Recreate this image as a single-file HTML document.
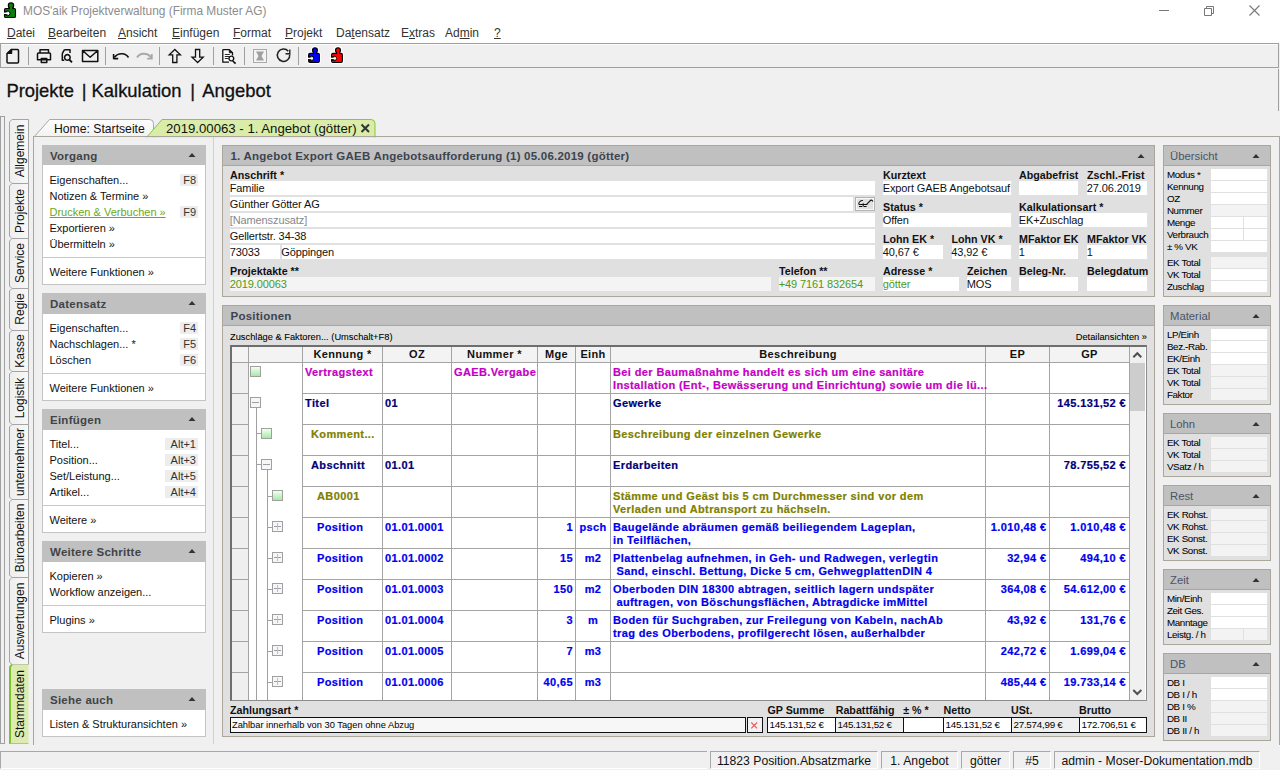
<!DOCTYPE html>
<html><head><meta charset="utf-8"><style>
html,body{margin:0;padding:0;}
body{width:1280px;height:770px;overflow:hidden;position:relative;background:#f0f0f0;font-family:"Liberation Sans", sans-serif;}
.a{position:absolute;}
.t{position:absolute;white-space:nowrap;}
u{text-decoration:underline;}
</style></head><body>
<div class="a" style="left:0px;top:0px;width:1280px;height:43px;background:#ffffff;"></div>
<svg class="a" style="left:0;top:0" width="20" height="20" viewBox="0 0 20 20"><g fill="none" stroke="#ffffff" stroke-width="3.4"><rect x="4.6" y="8.6" width="10.8" height="8.799999999999999" rx="1.2"/><circle cx="11" cy="5.4" r="2.6"/><rect x="9.3" y="5.4" width="3.4" height="4.199999999999999"/></g><g fill="#0a800a" stroke="#000" stroke-width="1.3"><rect x="4.6" y="8.6" width="10.8" height="8.799999999999999" rx="1.2"/><circle cx="11" cy="5.4" r="2.6"/><rect x="9.3" y="5.4" width="3.4" height="4.199999999999999"/></g><g fill="#0a800a" stroke="none"><rect x="5.199999999999999" y="9.2" width="9.600000000000001" height="7.599999999999999"/><circle cx="11" cy="5.4" r="2.0"/><rect x="9.9" y="5.4" width="2.2" height="4.699999999999999"/></g><circle cx="7.6" cy="13.3" r="2.4" fill="#ffffff" stroke="#000" stroke-width="1.0"/><rect x="3.5999999999999996" y="12.4" width="4.0" height="1.8" fill="#ffffff"/><path d="M3.9999999999999996 11.8h3.6 M3.9999999999999996 14.8h3.6" stroke="#000" stroke-width="1.1"/></svg>
<div class="t" style="top:6.03px;font-size:11.9px;line-height:11.9px;color:#8c8c8c;left:23px;">MOS'aik Projektverwaltung (Firma Muster AG)</div>
<div class="a" style="left:1159px;top:10px;width:10px;height:1px;background:#777;"></div>
<svg class="a" style="left:1202px;top:4px" width="14" height="14" viewBox="0 0 14 14"><path d="M2.5 4.5h7v7h-7z M4.5 4.5v-2h7v7h-2" fill="none" stroke="#777" stroke-width="1"/></svg>
<svg class="a" style="left:1248px;top:4px" width="14" height="14" viewBox="0 0 14 14"><path d="M1.5 1.5l10 10M11.5 1.5l-10 10" fill="none" stroke="#777" stroke-width="1.1"/></svg>
<div class="t" style="top:26.54px;font-size:12px;line-height:12px;color:#333;left:7px;"><u>D</u>atei</div>
<div class="t" style="top:26.54px;font-size:12px;line-height:12px;color:#333;left:48px;"><u>B</u>earbeiten</div>
<div class="t" style="top:26.54px;font-size:12px;line-height:12px;color:#333;left:118px;"><u>A</u>nsicht</div>
<div class="t" style="top:26.54px;font-size:12px;line-height:12px;color:#333;left:172px;"><u>E</u>infügen</div>
<div class="t" style="top:26.54px;font-size:12px;line-height:12px;color:#333;left:233px;"><u>F</u>ormat</div>
<div class="t" style="top:26.54px;font-size:12px;line-height:12px;color:#333;left:285px;"><u>P</u>rojekt</div>
<div class="t" style="top:26.54px;font-size:12px;line-height:12px;color:#333;left:336px;">Da<u>t</u>ensatz</div>
<div class="t" style="top:26.54px;font-size:12px;line-height:12px;color:#333;left:401px;">E<u>x</u>tras</div>
<div class="t" style="top:26.54px;font-size:12px;line-height:12px;color:#333;left:445px;">Ad<u>m</u>in</div>
<div class="t" style="top:26.54px;font-size:12px;line-height:12px;color:#333;left:494px;"><u>?</u></div>
<div class="a" style="left:0px;top:43px;width:1279px;height:25px;background:#f0f0f0;border:1px solid #a0a0a0;box-sizing:border-box;"></div>
<div class="a" style="left:1px;top:44px;width:1277px;height:1px;background:#fafafa;"></div>
<div class="a" style="left:28px;top:47px;width:1px;height:18px;background:#a0a0a0;"></div>
<div class="a" style="left:105px;top:47px;width:1px;height:18px;background:#a0a0a0;"></div>
<div class="a" style="left:159px;top:47px;width:1px;height:18px;background:#a0a0a0;"></div>
<div class="a" style="left:213px;top:47px;width:1px;height:18px;background:#a0a0a0;"></div>
<div class="a" style="left:244px;top:47px;width:1px;height:18px;background:#a0a0a0;"></div>
<div class="a" style="left:298px;top:47px;width:1px;height:18px;background:#a0a0a0;"></div>
<svg class="a" style="left:0;top:43px" width="360" height="25" viewBox="0 43 360 25">
<g fill="none" stroke="#111" stroke-width="1.5" stroke-linejoin="round">
<path d="M11.5 49.5h6a1 1 0 0 1 1 1v11.5a1 1 0 0 1-1 1h-9.5a1 1 0 0 1-1-1v-8.5z"/>
<path d="M7.8 53.3l3.7-3.8v3.8z" fill="#111"/>
<path d="M40 53v-3.3h8.5v3.3 M38.5 53h11a1 1 0 0 1 1 1v5.8h-13v-5.8a1 1 0 0 1 1-1z M41.3 58.5h5.5v4h-5.5z"/>
<path d="M64.5 49.7h5.5v3.3 M62.3 53.5l2.2-3.8 M62.3 53.5v6.8h2"/>
<path d="M67.3 54.6a2.8 2.8 0 1 0 .1 0z" stroke-width="1.6"/>
<path d="M69.2 59.5l2.8 2.8" stroke-width="1.8"/>
<path d="M82.5 50.5h15.3v11h-15.3z M82.5 50.5l7.65 6.8l7.65-6.8"/>
<path d="M128.5 57.5c-2.5-4.5-10-5.5-14.2 0" stroke-width="1.6"/>
<path d="M113.6 54v4.6h4.6" stroke-width="1.6"/>
</g>
<g fill="none" stroke="#a8a8a8" stroke-width="1.8"><path d="M137 57.5c2.5-4.5 10-5.5 14.2 0 M151.8 54v4.6h-4.6"/></g>
<g fill="none" stroke="#111" stroke-width="1.3" stroke-linejoin="miter">
<path d="M174.8 49.5l-5.6 5.4h3.5v7.6h4.2v-7.6h3.5z"/>
<path d="M197.6 62.5l-5.6-5.4h3.5v-7.6h4.2v7.6h3.5z"/>
</g>
<g fill="none" stroke="#111" stroke-width="1.3" stroke-linejoin="round">
<path d="M222.8 49.6h6.5l3.2 3.2v9.4h-9.7z" fill="#fafafa" stroke="none"/><path d="M222.8 49.6h6.5l3.2 3.2v2.6 M222.8 49.6v12.6h6.2"/><path d="M229.3 49.9l2.9 2.9h-2.9z" fill="#111" stroke-width="0.8"/>
<path d="M224.8 54.5h5 M224.8 56.5h5 M224.8 58.5h3.5" stroke-width="0.9" stroke-linecap="butt"/>
<path d="M231.3 56.1a2.4 2.4 0 1 0 .1 0z" fill="#fafafa" stroke-width="1.4"/>
<path d="M232.8 61l2.8 2.6" stroke-width="1.7"/>
</g>
<rect x="253.5" y="49.5" width="13" height="13" fill="#f4f4f4" stroke="#a8a8a8" stroke-width="1"/>
<path d="M256 51.5h8l-2.5 4.5l2.5 4.5h-8l2.5-4.5z" fill="#a0a0a0"/>
<g fill="none" stroke="#222" stroke-width="1.5"><path d="M288.3 51.2a6.2 6.2 0 1 0 1.4 3.2"/><path d="M289.8 49.5v4.3h-4.3" stroke-width="1.4"/></g>
<g fill="none" stroke="#ffffff" stroke-width="3.4"><rect x="308.7" y="53.5" width="10.600000000000023" height="8.799999999999997" rx="1.2"/><circle cx="315" cy="50.2" r="2.4"/><rect x="313.5" y="50.2" width="3" height="4.299999999999997"/></g><g fill="#0000ff" stroke="#000" stroke-width="1.3"><rect x="308.7" y="53.5" width="10.600000000000023" height="8.799999999999997" rx="1.2"/><circle cx="315" cy="50.2" r="2.4"/><rect x="313.5" y="50.2" width="3" height="4.299999999999997"/></g><g fill="#0000ff" stroke="none"><rect x="309.3" y="54.1" width="9.400000000000023" height="7.599999999999997"/><circle cx="315" cy="50.2" r="1.7999999999999998"/><rect x="314.1" y="50.2" width="1.8" height="4.799999999999997"/></g><circle cx="311.4" cy="58.4" r="2.2" fill="#ffffff" stroke="#000" stroke-width="1.0"/><rect x="307.7" y="57.5" width="3.6999999999999886" height="1.8" fill="#ffffff"/><path d="M308.09999999999997 56.9h3.2999999999999887 M308.09999999999997 59.9h3.2999999999999887" stroke="#000" stroke-width="1.1"/>
<g fill="none" stroke="#ffffff" stroke-width="3.4"><rect x="331.7" y="53.5" width="10.600000000000023" height="8.799999999999997" rx="1.2"/><circle cx="338" cy="50.2" r="2.4"/><rect x="336.5" y="50.2" width="3" height="4.299999999999997"/></g><g fill="#ff0000" stroke="#000" stroke-width="1.3"><rect x="331.7" y="53.5" width="10.600000000000023" height="8.799999999999997" rx="1.2"/><circle cx="338" cy="50.2" r="2.4"/><rect x="336.5" y="50.2" width="3" height="4.299999999999997"/></g><g fill="#ff0000" stroke="none"><rect x="332.3" y="54.1" width="9.400000000000023" height="7.599999999999997"/><circle cx="338" cy="50.2" r="1.7999999999999998"/><rect x="337.1" y="50.2" width="1.8" height="4.799999999999997"/></g><circle cx="334.4" cy="58.4" r="2.2" fill="#ffffff" stroke="#000" stroke-width="1.0"/><rect x="330.7" y="57.5" width="3.6999999999999886" height="1.8" fill="#ffffff"/><path d="M331.09999999999997 56.9h3.2999999999999887 M331.09999999999997 59.9h3.2999999999999887" stroke="#000" stroke-width="1.1"/>
</svg>
<div class="t" style="top:81.62px;font-size:18.4px;line-height:18.4px;color:#111;left:6.4px;-webkit-text-stroke:0.3px #111;">Projekte</div>
<div class="t" style="top:81.62px;font-size:18.4px;line-height:18.4px;color:#111;left:81.8px;-webkit-text-stroke:0.3px #111;">|</div>
<div class="t" style="top:81.62px;font-size:18.4px;line-height:18.4px;color:#111;left:91.6px;-webkit-text-stroke:0.3px #111;">Kalkulation</div>
<div class="t" style="top:81.62px;font-size:18.4px;line-height:18.4px;color:#111;left:190.2px;-webkit-text-stroke:0.3px #111;">|</div>
<div class="t" style="top:81.62px;font-size:18.4px;line-height:18.4px;color:#111;left:202.3px;-webkit-text-stroke:0.3px #111;">Angebot</div>
<div class="a" style="left:1278px;top:69px;width:1px;height:42px;background:#a0a0a0;"></div>
<div class="a" style="left:0px;top:116px;width:5px;height:628px;border:1px solid #a0a0a0;box-sizing:border-box;"></div>
<svg class="a" style="left:0;top:0" width="40" height="770" viewBox="0 0 40 770"><defs><linearGradient id="vt" x1="0" y1="0" x2="1" y2="0"><stop offset="0" stop-color="#eeeeee"/><stop offset="1" stop-color="#f8f8f8"/></linearGradient></defs><path d="M28.5 119.5H12L9.5 122V181L12 183.5H28.5z" fill="url(#vt)" stroke="#a4a4a4" stroke-width="1"/><path d="M28.5 183.5H12L9.5 186V236L12 238.5H28.5z" fill="url(#vt)" stroke="#a4a4a4" stroke-width="1"/><path d="M28.5 238.5H12L9.5 241V286L12 288.5H28.5z" fill="url(#vt)" stroke="#a4a4a4" stroke-width="1"/><path d="M28.5 288.5H12L9.5 291V328L12 330.5H28.5z" fill="url(#vt)" stroke="#a4a4a4" stroke-width="1"/><path d="M28.5 330.5H12L9.5 333V369L12 371.5H28.5z" fill="url(#vt)" stroke="#a4a4a4" stroke-width="1"/><path d="M28.5 371.5H12L9.5 374V422L12 424.5H28.5z" fill="url(#vt)" stroke="#a4a4a4" stroke-width="1"/><path d="M28.5 424.5H12L9.5 427V497L12 499.5H28.5z" fill="url(#vt)" stroke="#a4a4a4" stroke-width="1"/><path d="M28.5 499.5H12L9.5 502V575L12 577.5H28.5z" fill="url(#vt)" stroke="#a4a4a4" stroke-width="1"/><path d="M28.5 577.5H12L9.5 580V662L12 664.5H28.5z" fill="url(#vt)" stroke="#a4a4a4" stroke-width="1"/><path d="M28.5 664.5H12L9.5 667V744H28.5z" fill="#dcebb0"/><path d="M12 664.5L10 667V744" fill="none" stroke="#7fc030" stroke-width="2"/><path d="M10 743.5H28.5" fill="none" stroke="#b8b8b8" stroke-width="1"/></svg>
<div class="t" style="left:-40px;top:144.0px;width:120px;height:14px;line-height:14px;font-size:12px;text-align:center;transform:rotate(-90deg);color:#111">Allgemein</div>
<div class="t" style="left:-40px;top:203.5px;width:120px;height:14px;line-height:14px;font-size:12px;text-align:center;transform:rotate(-90deg);color:#111">Projekte</div>
<div class="t" style="left:-40px;top:256.0px;width:120px;height:14px;line-height:14px;font-size:12px;text-align:center;transform:rotate(-90deg);color:#111">Service</div>
<div class="t" style="left:-40px;top:302.0px;width:120px;height:14px;line-height:14px;font-size:12px;text-align:center;transform:rotate(-90deg);color:#111">Regie</div>
<div class="t" style="left:-40px;top:343.5px;width:120px;height:14px;line-height:14px;font-size:12px;text-align:center;transform:rotate(-90deg);color:#111">Kasse</div>
<div class="t" style="left:-40px;top:390.5px;width:120px;height:14px;line-height:14px;font-size:12px;text-align:center;transform:rotate(-90deg);color:#111">Logistik</div>
<div class="t" style="left:-40px;top:454.5px;width:120px;height:14px;line-height:14px;font-size:12px;text-align:center;transform:rotate(-90deg);color:#111">unternehmer</div>
<div class="t" style="left:-40px;top:531.0px;width:120px;height:14px;line-height:14px;font-size:12px;text-align:center;transform:rotate(-90deg);color:#111">Büroarbeiten</div>
<div class="t" style="left:-40px;top:613.5px;width:120px;height:14px;line-height:14px;font-size:12px;text-align:center;transform:rotate(-90deg);color:#111">Auswertungen</div>
<div class="t" style="left:-40px;top:697.0px;width:120px;height:14px;line-height:14px;font-size:12px;text-align:center;transform:rotate(-90deg);color:#111">Stammdaten</div>
<svg class="a" style="left:30px;top:115px" width="360" height="23" viewBox="30 115 360 23">
<defs><linearGradient id="gw" x1="0" y1="0" x2="0" y2="1"><stop offset="0" stop-color="#fdfdfd"/><stop offset="1" stop-color="#f2f2f2"/></linearGradient></defs>
<path d="M33.5 137.5l16-18h100a4 4 0 0 1 4 4v14" fill="url(#gw)" stroke="#a8a8a8" stroke-width="1"/>
<path d="M146.5 137.5l15.5-18h209a4 4 0 0 1 4 4v14" fill="#d9eca8" stroke="#8cc43c" stroke-width="1"/>
</svg>
<div class="t" style="top:122.87px;font-size:12.2px;line-height:12.2px;color:#111;left:54px;">Home: Startseite</div>
<div class="t" style="top:122.03px;font-size:13.2px;line-height:13.2px;color:#111;left:166px;">2019.00063 - 1. Angebot (götter)</div>
<svg class="a" style="left:360px;top:123px" width="11" height="11" viewBox="0 0 11 11"><path d="M1.5 1.5l7.5 7.5M9 1.5l-7.5 7.5" stroke="#333" stroke-width="2"/></svg>
<div class="a" style="left:33px;top:136px;width:1247px;height:609px;border:1px solid #aaa69a;box-sizing:border-box;border-bottom:none;"></div>
<div class="a" style="left:213px;top:137px;width:1px;height:607px;background:#d0d0d0;"></div>
<div class="a" style="left:42px;top:145px;width:164px;height:20px;background:#c0c0c0;"></div>
<div class="a" style="left:42px;top:165px;width:164px;height:120px;background:#ffffff;border:1px solid #c4c4c4;box-sizing:border-box;border-top:none;"></div>
<div class="t" style="top:150.87px;font-size:11.5px;line-height:11.5px;color:#404448;letter-spacing:0.25px;font-weight:700;left:50px;">Vorgang</div>
<svg class="a" style="left:187.5px;top:152px" width="8" height="6" viewBox="0 0 8 6"><path d="M0.5 5h7l-3.5-4z" fill="#333"/></svg>
<div class="t" style="top:174.69px;font-size:11px;line-height:11px;color:#111;left:49.5px;">Eigenschaften...</div>
<div class="a" style="left:180px;top:173.7px;width:18px;height:12.300000000000011px;background:#ededed;"></div>
<div class="t" style="top:174.69px;font-size:11px;line-height:11px;color:#333;right:1084px;">F8</div>
<div class="t" style="top:190.69px;font-size:11px;line-height:11px;color:#111;left:49.5px;">Notizen &amp; Termine »</div>
<div class="t" style="top:206.69px;font-size:11px;line-height:11px;color:#6aa818;left:49.5px;text-decoration:underline;">Drucken &amp; Verbuchen »</div>
<div class="a" style="left:180px;top:205.7px;width:18px;height:12.300000000000011px;background:#ededed;"></div>
<div class="t" style="top:206.69px;font-size:11px;line-height:11px;color:#333;right:1084px;">F9</div>
<div class="t" style="top:222.69px;font-size:11px;line-height:11px;color:#111;left:49.5px;">Exportieren »</div>
<div class="t" style="top:238.69px;font-size:11px;line-height:11px;color:#111;left:49.5px;">Übermitteln »</div>
<div class="a" style="left:43px;top:257px;width:162px;height:1px;background:#c8c8c8;"></div>
<div class="t" style="top:266.69px;font-size:11px;line-height:11px;color:#111;left:49.5px;">Weitere Funktionen »</div>
<div class="a" style="left:42px;top:293px;width:164px;height:21px;background:#c0c0c0;"></div>
<div class="a" style="left:42px;top:314px;width:164px;height:87px;background:#ffffff;border:1px solid #c4c4c4;box-sizing:border-box;border-top:none;"></div>
<div class="t" style="top:298.87px;font-size:11.5px;line-height:11.5px;color:#404448;letter-spacing:0.25px;font-weight:700;left:50px;">Datensatz</div>
<svg class="a" style="left:187.5px;top:300px" width="8" height="6" viewBox="0 0 8 6"><path d="M0.5 5h7l-3.5-4z" fill="#333"/></svg>
<div class="t" style="top:322.99px;font-size:11px;line-height:11px;color:#111;left:49.5px;">Eigenschaften...</div>
<div class="a" style="left:180px;top:322.0px;width:18px;height:12.300000000000011px;background:#ededed;"></div>
<div class="t" style="top:322.99px;font-size:11px;line-height:11px;color:#333;right:1084px;">F4</div>
<div class="t" style="top:338.99px;font-size:11px;line-height:11px;color:#111;left:49.5px;">Nachschlagen... *</div>
<div class="a" style="left:180px;top:338.0px;width:18px;height:12.300000000000011px;background:#ededed;"></div>
<div class="t" style="top:338.99px;font-size:11px;line-height:11px;color:#333;right:1084px;">F5</div>
<div class="t" style="top:354.99px;font-size:11px;line-height:11px;color:#111;left:49.5px;">Löschen</div>
<div class="a" style="left:180px;top:354.0px;width:18px;height:12.300000000000011px;background:#ededed;"></div>
<div class="t" style="top:354.99px;font-size:11px;line-height:11px;color:#333;right:1084px;">F6</div>
<div class="a" style="left:43px;top:373px;width:162px;height:1px;background:#c8c8c8;"></div>
<div class="t" style="top:382.99px;font-size:11px;line-height:11px;color:#111;left:49.5px;">Weitere Funktionen »</div>
<div class="a" style="left:42px;top:409px;width:164px;height:21px;background:#c0c0c0;"></div>
<div class="a" style="left:42px;top:430px;width:164px;height:103px;background:#ffffff;border:1px solid #c4c4c4;box-sizing:border-box;border-top:none;"></div>
<div class="t" style="top:414.87px;font-size:11.5px;line-height:11.5px;color:#404448;letter-spacing:0.25px;font-weight:700;left:50px;">Einfügen</div>
<svg class="a" style="left:187.5px;top:416px" width="8" height="6" viewBox="0 0 8 6"><path d="M0.5 5h7l-3.5-4z" fill="#333"/></svg>
<div class="t" style="top:439.19px;font-size:11px;line-height:11px;color:#111;left:49.5px;">Titel...</div>
<div class="a" style="left:165px;top:438.2px;width:33px;height:12.300000000000011px;background:#ededed;"></div>
<div class="t" style="top:439.19px;font-size:11px;line-height:11px;color:#333;right:1084px;">Alt+1</div>
<div class="t" style="top:455.19px;font-size:11px;line-height:11px;color:#111;left:49.5px;">Position...</div>
<div class="a" style="left:165px;top:454.2px;width:33px;height:12.300000000000011px;background:#ededed;"></div>
<div class="t" style="top:455.19px;font-size:11px;line-height:11px;color:#333;right:1084px;">Alt+3</div>
<div class="t" style="top:471.19px;font-size:11px;line-height:11px;color:#111;left:49.5px;">Set/Leistung...</div>
<div class="a" style="left:165px;top:470.2px;width:33px;height:12.300000000000011px;background:#ededed;"></div>
<div class="t" style="top:471.19px;font-size:11px;line-height:11px;color:#333;right:1084px;">Alt+5</div>
<div class="t" style="top:487.19px;font-size:11px;line-height:11px;color:#111;left:49.5px;">Artikel...</div>
<div class="a" style="left:165px;top:486.2px;width:33px;height:12.300000000000011px;background:#ededed;"></div>
<div class="t" style="top:487.19px;font-size:11px;line-height:11px;color:#333;right:1084px;">Alt+4</div>
<div class="a" style="left:43px;top:505px;width:162px;height:1px;background:#c8c8c8;"></div>
<div class="t" style="top:514.99px;font-size:11px;line-height:11px;color:#111;left:49.5px;">Weitere »</div>
<div class="a" style="left:42px;top:541px;width:164px;height:21px;background:#c0c0c0;"></div>
<div class="a" style="left:42px;top:562px;width:164px;height:71px;background:#ffffff;border:1px solid #c4c4c4;box-sizing:border-box;border-top:none;"></div>
<div class="t" style="top:546.87px;font-size:11.5px;line-height:11.5px;color:#404448;letter-spacing:0.25px;font-weight:700;left:50px;">Weitere Schritte</div>
<svg class="a" style="left:187.5px;top:548px" width="8" height="6" viewBox="0 0 8 6"><path d="M0.5 5h7l-3.5-4z" fill="#333"/></svg>
<div class="t" style="top:571.19px;font-size:11px;line-height:11px;color:#111;left:49.5px;">Kopieren »</div>
<div class="t" style="top:587.19px;font-size:11px;line-height:11px;color:#111;left:49.5px;">Workflow anzeigen...</div>
<div class="a" style="left:43px;top:605px;width:162px;height:1px;background:#c8c8c8;"></div>
<div class="t" style="top:614.89px;font-size:11px;line-height:11px;color:#111;left:49.5px;">Plugins »</div>
<div class="a" style="left:42px;top:689px;width:164px;height:21px;background:#c0c0c0;"></div>
<div class="a" style="left:42px;top:710px;width:164px;height:27px;background:#ffffff;border:1px solid #c4c4c4;box-sizing:border-box;border-top:none;"></div>
<div class="t" style="top:694.87px;font-size:11.5px;line-height:11.5px;color:#404448;letter-spacing:0.25px;font-weight:700;left:50px;">Siehe auch</div>
<svg class="a" style="left:187.5px;top:696px" width="8" height="6" viewBox="0 0 8 6"><path d="M0.5 5h7l-3.5-4z" fill="#333"/></svg>
<div class="t" style="top:719.19px;font-size:11px;line-height:11px;color:#111;left:49.5px;">Listen &amp; Strukturansichten »</div>
<div class="a" style="left:222px;top:145px;width:933px;height:152px;background:#e0e0e0;border:1px solid #aaa69a;box-sizing:border-box;"></div>
<div class="a" style="left:223px;top:146px;width:931px;height:19px;background:#c0c0c0;"></div>
<div class="a" style="left:223px;top:165px;width:931px;height:1px;background:#aaa69a;"></div>
<div class="t" style="top:150.87px;font-size:11.5px;line-height:11.5px;color:#3c4450;letter-spacing:0.225px;font-weight:700;left:230.5px;">1. Angebot Export GAEB Angebotsaufforderung (1) 05.06.2019 (götter)</div>
<svg class="a" style="left:1137px;top:153px" width="8" height="6" viewBox="0 0 8 6"><path d="M0.5 5h7l-3.5-4z" fill="#333"/></svg>
<div class="t" style="top:169.64px;font-size:10.7px;line-height:10.7px;color:#111;font-weight:700;left:230px;">Anschrift *</div>
<div class="a" style="left:230px;top:181px;width:645px;height:14px;background:#fff;"></div>
<div class="t" style="top:183.09px;font-size:11px;line-height:11px;color:#111;letter-spacing:-0.1px;left:229.7px;">Familie</div>
<div class="a" style="left:230px;top:197px;width:623px;height:14px;background:#fff;"></div>
<div class="t" style="top:199.09px;font-size:11px;line-height:11px;color:#111;letter-spacing:-0.1px;left:229.7px;">Günther Götter AG</div>
<div class="a" style="left:855px;top:197px;width:20px;height:14px;background:#e8e8e8;border:1px solid #b4b4b4;box-sizing:border-box;"></div>
<svg class="a" style="left:850px;top:194px" width="30" height="20" viewBox="850 194 30 20"><rect x="856.5" y="198.5" width="17" height="11" fill="#e2e2e2" stroke="#f8f8f8" stroke-width="1"/><g fill="none" stroke="#111" stroke-width="1.05"><path d="M858.6 204.2C858.9 201.8 860.8 200.2 862.9 200.6"/><path d="M858.8 204.4H867.4 M859 206.5H862.3 M863.6 206.5H866.6 M863.2 203.2V206.2"/><path d="M866.6 204.3L870.6 200.3Q871.9 199.6 873 201.4"/></g></svg>
<div class="a" style="left:230px;top:213px;width:645px;height:14px;background:#fff;"></div>
<div class="t" style="top:215.09px;font-size:11px;line-height:11px;color:#888;letter-spacing:-0.1px;left:229.7px;">[Namenszusatz]</div>
<div class="a" style="left:230px;top:229px;width:645px;height:14px;background:#fff;"></div>
<div class="t" style="top:231.09px;font-size:11px;line-height:11px;color:#111;letter-spacing:-0.1px;left:229.7px;">Gellertstr. 34-38</div>
<div class="a" style="left:230px;top:245px;width:50px;height:14px;background:#fff;"></div>
<div class="t" style="top:247.09px;font-size:11px;line-height:11px;color:#111;letter-spacing:-0.1px;left:229.7px;">73033</div>
<div class="a" style="left:281.5px;top:245px;width:593.5px;height:14px;background:#fff;"></div>
<div class="t" style="top:247.09px;font-size:11px;line-height:11px;color:#111;letter-spacing:-0.1px;left:281.2px;">Göppingen</div>
<div class="t" style="top:265.94px;font-size:10.7px;line-height:10.7px;color:#111;font-weight:700;left:230px;">Projektakte **</div>
<div class="a" style="left:230px;top:277px;width:541px;height:14px;background:#f4f4f4;"></div>
<div class="t" style="top:279.09px;font-size:11px;line-height:11px;color:#4e9a16;letter-spacing:-0.1px;left:229.7px;">2019.00063</div>
<div class="t" style="top:265.94px;font-size:10.7px;line-height:10.7px;color:#111;font-weight:700;left:779px;">Telefon **</div>
<div class="a" style="left:779px;top:277px;width:95.5px;height:14px;background:#f4f4f4;"></div>
<div class="t" style="top:279.09px;font-size:11px;line-height:11px;color:#4e9a16;letter-spacing:-0.1px;left:778.7px;">+49 7161 832654</div>
<div class="t" style="top:169.64px;font-size:10.7px;line-height:10.7px;color:#111;font-weight:700;left:883px;">Kurztext</div>
<div class="t" style="top:169.64px;font-size:10.7px;line-height:10.7px;color:#111;font-weight:700;left:1019px;">Abgabefrist</div>
<div class="t" style="top:169.64px;font-size:10.7px;line-height:10.7px;color:#111;font-weight:700;left:1087px;">Zschl.-Frist</div>
<div class="a" style="left:883px;top:181px;width:128px;height:14px;background:#fff;"></div>
<div class="t" style="top:183.09px;font-size:11px;line-height:11px;color:#111;letter-spacing:-0.1px;left:882.7px;">Export GAEB Angebotsauf</div>
<div class="a" style="left:1019px;top:181px;width:59px;height:14px;background:#fff;"></div>
<div class="a" style="left:1087px;top:181px;width:60px;height:14px;background:#fff;"></div>
<div class="t" style="top:183.09px;font-size:11px;line-height:11px;color:#111;letter-spacing:-0.1px;left:1086.7px;">27.06.2019</div>
<div class="t" style="top:201.54px;font-size:10.7px;line-height:10.7px;color:#111;font-weight:700;left:883px;">Status *</div>
<div class="t" style="top:201.54px;font-size:10.7px;line-height:10.7px;color:#111;font-weight:700;left:1019px;">Kalkulationsart *</div>
<div class="a" style="left:883px;top:213px;width:128px;height:14px;background:#fff;"></div>
<div class="t" style="top:215.09px;font-size:11px;line-height:11px;color:#111;letter-spacing:-0.1px;left:882.7px;">Offen</div>
<div class="a" style="left:1019px;top:213px;width:128px;height:14px;background:#fff;"></div>
<div class="t" style="top:215.09px;font-size:11px;line-height:11px;color:#111;letter-spacing:-0.1px;left:1018.7px;">EK+Zuschlag</div>
<div class="t" style="top:233.74px;font-size:10.7px;line-height:10.7px;color:#111;font-weight:700;left:883px;">Lohn EK *</div>
<div class="t" style="top:233.74px;font-size:10.7px;line-height:10.7px;color:#111;font-weight:700;left:951.5px;">Lohn VK *</div>
<div class="t" style="top:233.74px;font-size:10.7px;line-height:10.7px;color:#111;font-weight:700;left:1019px;">MFaktor EK</div>
<div class="t" style="top:233.74px;font-size:10.7px;line-height:10.7px;color:#111;font-weight:700;left:1087px;">MFaktor VK</div>
<div class="a" style="left:883px;top:245px;width:60px;height:14px;background:#fff;"></div>
<div class="t" style="top:247.09px;font-size:11px;line-height:11px;color:#111;letter-spacing:-0.1px;left:882.7px;">40,67 €</div>
<div class="a" style="left:951.5px;top:245px;width:59.5px;height:14px;background:#fff;"></div>
<div class="t" style="top:247.09px;font-size:11px;line-height:11px;color:#111;letter-spacing:-0.1px;left:951.2px;">43,92 €</div>
<div class="a" style="left:1019px;top:245px;width:59px;height:14px;background:#fff;"></div>
<div class="t" style="top:247.09px;font-size:11px;line-height:11px;color:#111;letter-spacing:-0.1px;left:1018.7px;">1</div>
<div class="a" style="left:1087px;top:245px;width:60px;height:14px;background:#fff;"></div>
<div class="t" style="top:247.09px;font-size:11px;line-height:11px;color:#111;letter-spacing:-0.1px;left:1086.7px;">1</div>
<div class="t" style="top:265.94px;font-size:10.7px;line-height:10.7px;color:#111;font-weight:700;left:883px;">Adresse *</div>
<div class="t" style="top:265.94px;font-size:10.7px;line-height:10.7px;color:#111;font-weight:700;left:967px;">Zeichen</div>
<div class="t" style="top:265.94px;font-size:10.7px;line-height:10.7px;color:#111;font-weight:700;left:1019px;">Beleg-Nr.</div>
<div class="t" style="top:265.94px;font-size:10.7px;line-height:10.7px;color:#111;font-weight:700;left:1087px;">Belegdatum</div>
<div class="a" style="left:883px;top:277px;width:76px;height:14px;background:#fff;"></div>
<div class="t" style="top:279.09px;font-size:11px;line-height:11px;color:#4e9a16;letter-spacing:-0.1px;left:882.7px;">götter</div>
<div class="a" style="left:967px;top:277px;width:44px;height:14px;background:#fff;"></div>
<div class="t" style="top:279.09px;font-size:11px;line-height:11px;color:#111;letter-spacing:-0.1px;left:966.7px;">MOS</div>
<div class="a" style="left:1019px;top:277px;width:59px;height:14px;background:#fff;"></div>
<div class="a" style="left:1087px;top:277px;width:60px;height:14px;background:#fff;"></div>
<div class="a" style="left:222px;top:305px;width:933px;height:432px;background:#e0e0e0;border:1px solid #aaa69a;box-sizing:border-box;"></div>
<div class="a" style="left:223px;top:306px;width:931px;height:19px;background:#c0c0c0;"></div>
<div class="a" style="left:223px;top:325px;width:931px;height:1px;background:#aaa69a;"></div>
<div class="t" style="top:310.87px;font-size:11.5px;line-height:11.5px;color:#3c4450;letter-spacing:0.225px;font-weight:700;left:230.5px;">Positionen</div>
<div class="t" style="top:332.53px;font-size:9.3px;line-height:9.3px;color:#000;left:230px;-webkit-text-stroke:0.08px #000;">Zuschläge &amp; Faktoren... (Umschalt+F8)</div>
<div class="t" style="top:332.73px;font-size:9.3px;line-height:9.3px;color:#000;right:133px;-webkit-text-stroke:0.08px #000;">Detailansichten »</div>
<div class="a" style="left:230px;top:345px;width:917px;height:356px;background:#ffffff;"></div>
<div class="a" style="left:232px;top:346px;width:897px;height:16px;background:#f3f3f3;"></div>
<div class="a" style="left:232px;top:362px;width:16px;height:338px;background:#efefef;"></div>
<div class="a" style="left:232px;top:362px;width:16px;height:1px;background:#a4a4a4;"></div>
<div class="a" style="left:302px;top:362px;width:827px;height:1px;background:#a4a4a4;"></div>
<div class="a" style="left:232px;top:393px;width:16px;height:1px;background:#a4a4a4;"></div>
<div class="a" style="left:302px;top:393px;width:827px;height:1px;background:#a4a4a4;"></div>
<div class="a" style="left:232px;top:424px;width:16px;height:1px;background:#a4a4a4;"></div>
<div class="a" style="left:302px;top:424px;width:827px;height:1px;background:#a4a4a4;"></div>
<div class="a" style="left:232px;top:455px;width:16px;height:1px;background:#a4a4a4;"></div>
<div class="a" style="left:302px;top:455px;width:827px;height:1px;background:#a4a4a4;"></div>
<div class="a" style="left:232px;top:486px;width:16px;height:1px;background:#a4a4a4;"></div>
<div class="a" style="left:302px;top:486px;width:827px;height:1px;background:#a4a4a4;"></div>
<div class="a" style="left:232px;top:517px;width:16px;height:1px;background:#a4a4a4;"></div>
<div class="a" style="left:302px;top:517px;width:827px;height:1px;background:#a4a4a4;"></div>
<div class="a" style="left:232px;top:548px;width:16px;height:1px;background:#a4a4a4;"></div>
<div class="a" style="left:302px;top:548px;width:827px;height:1px;background:#a4a4a4;"></div>
<div class="a" style="left:232px;top:579px;width:16px;height:1px;background:#a4a4a4;"></div>
<div class="a" style="left:302px;top:579px;width:827px;height:1px;background:#a4a4a4;"></div>
<div class="a" style="left:232px;top:610px;width:16px;height:1px;background:#a4a4a4;"></div>
<div class="a" style="left:302px;top:610px;width:827px;height:1px;background:#a4a4a4;"></div>
<div class="a" style="left:232px;top:641px;width:16px;height:1px;background:#a4a4a4;"></div>
<div class="a" style="left:302px;top:641px;width:827px;height:1px;background:#a4a4a4;"></div>
<div class="a" style="left:232px;top:672px;width:16px;height:1px;background:#a4a4a4;"></div>
<div class="a" style="left:302px;top:672px;width:827px;height:1px;background:#a4a4a4;"></div>
<div class="a" style="left:248px;top:362px;width:54px;height:1px;background:#a4a4a4;"></div>
<div class="a" style="left:248px;top:346px;width:1px;height:354px;background:#a4a4a4;"></div>
<div class="a" style="left:302px;top:346px;width:1px;height:354px;background:#a4a4a4;"></div>
<div class="a" style="left:382px;top:346px;width:1px;height:354px;background:#a4a4a4;"></div>
<div class="a" style="left:451px;top:346px;width:1px;height:354px;background:#a4a4a4;"></div>
<div class="a" style="left:537px;top:346px;width:1px;height:354px;background:#a4a4a4;"></div>
<div class="a" style="left:575px;top:346px;width:1px;height:354px;background:#a4a4a4;"></div>
<div class="a" style="left:610px;top:346px;width:1px;height:354px;background:#a4a4a4;"></div>
<div class="a" style="left:985px;top:346px;width:1px;height:354px;background:#a4a4a4;"></div>
<div class="a" style="left:1049px;top:346px;width:1px;height:354px;background:#a4a4a4;"></div>
<div class="a" style="left:1129px;top:346px;width:1px;height:354px;background:#a4a4a4;"></div>
<div class="t" style="top:349.29px;font-size:11px;line-height:11px;color:#111;letter-spacing:0.35px;font-weight:700;left:42.5px;width:600px;text-align:center;">Kennung *</div>
<div class="t" style="top:349.29px;font-size:11px;line-height:11px;color:#111;letter-spacing:0.35px;font-weight:700;left:117.0px;width:600px;text-align:center;">OZ</div>
<div class="t" style="top:349.29px;font-size:11px;line-height:11px;color:#111;letter-spacing:0.35px;font-weight:700;left:194.5px;width:600px;text-align:center;">Nummer *</div>
<div class="t" style="top:349.29px;font-size:11px;line-height:11px;color:#111;letter-spacing:0.35px;font-weight:700;left:256.5px;width:600px;text-align:center;">Mge</div>
<div class="t" style="top:349.29px;font-size:11px;line-height:11px;color:#111;letter-spacing:0.35px;font-weight:700;left:293.0px;width:600px;text-align:center;">Einh</div>
<div class="t" style="top:349.29px;font-size:11px;line-height:11px;color:#111;letter-spacing:0.35px;font-weight:700;left:498.0px;width:600px;text-align:center;">Beschreibung</div>
<div class="t" style="top:349.29px;font-size:11px;line-height:11px;color:#111;letter-spacing:0.35px;font-weight:700;left:717.5px;width:600px;text-align:center;">EP</div>
<div class="t" style="top:349.29px;font-size:11px;line-height:11px;color:#111;letter-spacing:0.35px;font-weight:700;left:789.5px;width:600px;text-align:center;">GP</div>
<div class="a" style="left:1129px;top:346px;width:16px;height:354px;background:#f0f0f0;"></div>
<div class="a" style="left:1128.5px;top:346px;width:1px;height:354px;background:#a4a4a4;"></div>
<div class="a" style="left:1130px;top:363px;width:15px;height:48px;background:#cdcdcd;"></div>
<svg class="a" style="left:1131px;top:350px" width="12" height="10" viewBox="0 0 12 10"><path d="M2.3 7.2l4-4 4 4" fill="none" stroke="#505050" stroke-width="2"/></svg>
<svg class="a" style="left:1131px;top:686.5px" width="12" height="10" viewBox="0 0 12 10"><path d="M2.3 3l4 4 4-4" fill="none" stroke="#505050" stroke-width="2"/></svg>
<div class="a" style="left:230px;top:345px;width:917px;height:356px;border:2px solid #6e6e6e;box-sizing:border-box;border-right:1px solid #8c8c8c;border-bottom:1px solid #8c8c8c;"></div>
<div class="a" style="left:256px;top:407px;width:1px;height:293px;background:#a0a0a0;"></div>
<div class="a" style="left:267px;top:469px;width:1px;height:231px;background:#a0a0a0;"></div>
<div class="a" style="left:256px;top:433px;width:5px;height:1px;background:#a0a0a0;"></div>
<div class="a" style="left:256px;top:464px;width:5px;height:1px;background:#a0a0a0;"></div>
<div class="a" style="left:267px;top:496px;width:5px;height:1px;background:#a0a0a0;"></div>
<div class="a" style="left:267px;top:527px;width:5px;height:1px;background:#a0a0a0;"></div>
<div class="a" style="left:267px;top:558px;width:5px;height:1px;background:#a0a0a0;"></div>
<div class="a" style="left:267px;top:589px;width:5px;height:1px;background:#a0a0a0;"></div>
<div class="a" style="left:267px;top:620px;width:5px;height:1px;background:#a0a0a0;"></div>
<div class="a" style="left:267px;top:651px;width:5px;height:1px;background:#a0a0a0;"></div>
<div class="a" style="left:267px;top:682px;width:5px;height:1px;background:#a0a0a0;"></div>
<div class="t" style="top:367.09px;font-size:11px;line-height:11px;color:#c400c4;letter-spacing:0.38px;font-weight:700;left:305px;-webkit-text-stroke:0.2px currentColor;">Vertragstext</div>
<div class="t" style="top:367.09px;font-size:11px;line-height:11px;color:#c400c4;letter-spacing:0.38px;font-weight:700;left:454px;-webkit-text-stroke:0.2px currentColor;">GAEB.Vergabe</div>
<div class="t" style="top:367.09px;font-size:11px;line-height:11px;color:#c400c4;letter-spacing:0.38px;font-weight:700;left:613px;-webkit-text-stroke:0.2px currentColor;">Bei der Baumaßnahme handelt es sich um eine sanitäre</div>
<div class="t" style="top:380.09px;font-size:11px;line-height:11px;color:#c400c4;letter-spacing:0.38px;font-weight:700;left:613px;-webkit-text-stroke:0.2px currentColor;">Installation (Ent-, Bewässerung und Einrichtung) sowie um die lü...</div>
<div class="a" style="left:250px;top:366px;width:11px;height:11px;box-sizing:border-box;border:1px solid #a0a0a0;background:linear-gradient(#f2fff2,#a8e8a8)"></div>
<div class="t" style="top:398.09px;font-size:11px;line-height:11px;color:#00007a;letter-spacing:0.38px;font-weight:700;left:305px;-webkit-text-stroke:0.2px currentColor;">Titel</div>
<div class="t" style="top:398.09px;font-size:11px;line-height:11px;color:#00007a;letter-spacing:0.38px;font-weight:700;left:385px;-webkit-text-stroke:0.2px currentColor;">01</div>
<div class="t" style="top:398.09px;font-size:11px;line-height:11px;color:#00007a;letter-spacing:0.38px;font-weight:700;left:613px;-webkit-text-stroke:0.2px currentColor;">Gewerke</div>
<div class="t" style="top:398.09px;font-size:11px;line-height:11px;color:#00007a;letter-spacing:0.38px;font-weight:700;right:154px;-webkit-text-stroke:0.2px currentColor;">145.131,52 €</div>
<div class="a" style="left:250px;top:397px;width:11px;height:11px;box-sizing:border-box;border:1px solid #a0a0a0;background:#f6f6f6"></div>
<div class="a" style="left:252px;top:402px;width:7px;height:1px;background:#9aa0aa;"></div>
<div class="t" style="top:429.09px;font-size:11px;line-height:11px;color:#7f7f00;letter-spacing:0.38px;font-weight:700;left:311px;-webkit-text-stroke:0.2px currentColor;">Komment...</div>
<div class="t" style="top:429.09px;font-size:11px;line-height:11px;color:#7f7f00;letter-spacing:0.38px;font-weight:700;left:613px;-webkit-text-stroke:0.2px currentColor;">Beschreibung der einzelnen Gewerke</div>
<div class="a" style="left:261px;top:428px;width:11px;height:11px;box-sizing:border-box;border:1px solid #a0a0a0;background:linear-gradient(#f2fff2,#a8e8a8)"></div>
<div class="t" style="top:460.09px;font-size:11px;line-height:11px;color:#00007a;letter-spacing:0.38px;font-weight:700;left:311px;-webkit-text-stroke:0.2px currentColor;">Abschnitt</div>
<div class="t" style="top:460.09px;font-size:11px;line-height:11px;color:#00007a;letter-spacing:0.38px;font-weight:700;left:385px;-webkit-text-stroke:0.2px currentColor;">01.01</div>
<div class="t" style="top:460.09px;font-size:11px;line-height:11px;color:#00007a;letter-spacing:0.38px;font-weight:700;left:613px;-webkit-text-stroke:0.2px currentColor;">Erdarbeiten</div>
<div class="t" style="top:460.09px;font-size:11px;line-height:11px;color:#00007a;letter-spacing:0.38px;font-weight:700;right:154px;-webkit-text-stroke:0.2px currentColor;">78.755,52 €</div>
<div class="a" style="left:261px;top:459px;width:11px;height:11px;box-sizing:border-box;border:1px solid #a0a0a0;background:#f6f6f6"></div>
<div class="a" style="left:263px;top:464px;width:7px;height:1px;background:#9aa0aa;"></div>
<div class="t" style="top:491.09px;font-size:11px;line-height:11px;color:#7f7f00;letter-spacing:0.38px;font-weight:700;left:317px;-webkit-text-stroke:0.2px currentColor;">AB0001</div>
<div class="t" style="top:491.09px;font-size:11px;line-height:11px;color:#7f7f00;letter-spacing:0.38px;font-weight:700;left:613px;-webkit-text-stroke:0.2px currentColor;">Stämme und Geäst bis 5 cm Durchmesser sind vor dem</div>
<div class="t" style="top:504.09px;font-size:11px;line-height:11px;color:#7f7f00;letter-spacing:0.38px;font-weight:700;left:613px;-webkit-text-stroke:0.2px currentColor;">Verladen und Abtransport zu hächseln.</div>
<div class="a" style="left:272px;top:490px;width:11px;height:11px;box-sizing:border-box;border:1px solid #a0a0a0;background:linear-gradient(#f2fff2,#a8e8a8)"></div>
<div class="t" style="top:522.09px;font-size:11px;line-height:11px;color:#0000f0;letter-spacing:0.38px;font-weight:700;left:317px;-webkit-text-stroke:0.2px currentColor;">Position</div>
<div class="t" style="top:522.09px;font-size:11px;line-height:11px;color:#0000f0;letter-spacing:0.38px;font-weight:700;left:385px;-webkit-text-stroke:0.2px currentColor;">01.01.0001</div>
<div class="t" style="top:522.09px;font-size:11px;line-height:11px;color:#0000f0;letter-spacing:0.38px;font-weight:700;right:707px;-webkit-text-stroke:0.2px currentColor;">1</div>
<div class="t" style="top:522.09px;font-size:11px;line-height:11px;color:#0000f0;letter-spacing:0.38px;font-weight:700;left:293px;width:600px;text-align:center;-webkit-text-stroke:0.2px currentColor;">psch</div>
<div class="t" style="top:522.09px;font-size:11px;line-height:11px;color:#0000f0;letter-spacing:0.38px;font-weight:700;left:613px;-webkit-text-stroke:0.2px currentColor;">Baugelände abräumen gemäß beiliegendem Lageplan,</div>
<div class="t" style="top:535.09px;font-size:11px;line-height:11px;color:#0000f0;letter-spacing:0.38px;font-weight:700;left:613px;-webkit-text-stroke:0.2px currentColor;">in Teilflächen,</div>
<div class="t" style="top:522.09px;font-size:11px;line-height:11px;color:#0000f0;letter-spacing:0.38px;font-weight:700;right:233.5px;-webkit-text-stroke:0.2px currentColor;">1.010,48 €</div>
<div class="t" style="top:522.09px;font-size:11px;line-height:11px;color:#0000f0;letter-spacing:0.38px;font-weight:700;right:154px;-webkit-text-stroke:0.2px currentColor;">1.010,48 €</div>
<div class="a" style="left:272px;top:521px;width:11px;height:11px;box-sizing:border-box;border:1px solid #a0a0a0;background:#f6f6f6"></div>
<div class="a" style="left:274px;top:526px;width:7px;height:1px;background:#9aa0aa;"></div>
<div class="a" style="left:277px;top:523px;width:1px;height:7px;background:#b8c0cc;"></div>
<div class="t" style="top:553.09px;font-size:11px;line-height:11px;color:#0000f0;letter-spacing:0.38px;font-weight:700;left:317px;-webkit-text-stroke:0.2px currentColor;">Position</div>
<div class="t" style="top:553.09px;font-size:11px;line-height:11px;color:#0000f0;letter-spacing:0.38px;font-weight:700;left:385px;-webkit-text-stroke:0.2px currentColor;">01.01.0002</div>
<div class="t" style="top:553.09px;font-size:11px;line-height:11px;color:#0000f0;letter-spacing:0.38px;font-weight:700;right:707px;-webkit-text-stroke:0.2px currentColor;">15</div>
<div class="t" style="top:553.09px;font-size:11px;line-height:11px;color:#0000f0;letter-spacing:0.38px;font-weight:700;left:293px;width:600px;text-align:center;-webkit-text-stroke:0.2px currentColor;">m2</div>
<div class="t" style="top:553.09px;font-size:11px;line-height:11px;color:#0000f0;letter-spacing:0.38px;font-weight:700;left:613px;-webkit-text-stroke:0.2px currentColor;">Plattenbelag aufnehmen, in Geh- und Radwegen, verlegtin</div>
<div class="t" style="top:566.09px;font-size:11px;line-height:11px;color:#0000f0;letter-spacing:0.38px;font-weight:700;left:613px;-webkit-text-stroke:0.2px currentColor;">&nbsp;Sand, einschl. Bettung, Dicke 5 cm, GehwegplattenDIN 4</div>
<div class="t" style="top:553.09px;font-size:11px;line-height:11px;color:#0000f0;letter-spacing:0.38px;font-weight:700;right:233.5px;-webkit-text-stroke:0.2px currentColor;">32,94 €</div>
<div class="t" style="top:553.09px;font-size:11px;line-height:11px;color:#0000f0;letter-spacing:0.38px;font-weight:700;right:154px;-webkit-text-stroke:0.2px currentColor;">494,10 €</div>
<div class="a" style="left:272px;top:552px;width:11px;height:11px;box-sizing:border-box;border:1px solid #a0a0a0;background:#f6f6f6"></div>
<div class="a" style="left:274px;top:557px;width:7px;height:1px;background:#9aa0aa;"></div>
<div class="a" style="left:277px;top:554px;width:1px;height:7px;background:#b8c0cc;"></div>
<div class="t" style="top:584.09px;font-size:11px;line-height:11px;color:#0000f0;letter-spacing:0.38px;font-weight:700;left:317px;-webkit-text-stroke:0.2px currentColor;">Position</div>
<div class="t" style="top:584.09px;font-size:11px;line-height:11px;color:#0000f0;letter-spacing:0.38px;font-weight:700;left:385px;-webkit-text-stroke:0.2px currentColor;">01.01.0003</div>
<div class="t" style="top:584.09px;font-size:11px;line-height:11px;color:#0000f0;letter-spacing:0.38px;font-weight:700;right:707px;-webkit-text-stroke:0.2px currentColor;">150</div>
<div class="t" style="top:584.09px;font-size:11px;line-height:11px;color:#0000f0;letter-spacing:0.38px;font-weight:700;left:293px;width:600px;text-align:center;-webkit-text-stroke:0.2px currentColor;">m2</div>
<div class="t" style="top:584.09px;font-size:11px;line-height:11px;color:#0000f0;letter-spacing:0.38px;font-weight:700;left:613px;-webkit-text-stroke:0.2px currentColor;">Oberboden DIN 18300 abtragen, seitlich lagern undspäter</div>
<div class="t" style="top:597.09px;font-size:11px;line-height:11px;color:#0000f0;letter-spacing:0.38px;font-weight:700;left:613px;-webkit-text-stroke:0.2px currentColor;">&nbsp;auftragen, von Böschungsflächen, Abtragdicke imMittel</div>
<div class="t" style="top:584.09px;font-size:11px;line-height:11px;color:#0000f0;letter-spacing:0.38px;font-weight:700;right:233.5px;-webkit-text-stroke:0.2px currentColor;">364,08 €</div>
<div class="t" style="top:584.09px;font-size:11px;line-height:11px;color:#0000f0;letter-spacing:0.38px;font-weight:700;right:154px;-webkit-text-stroke:0.2px currentColor;">54.612,00 €</div>
<div class="a" style="left:272px;top:583px;width:11px;height:11px;box-sizing:border-box;border:1px solid #a0a0a0;background:#f6f6f6"></div>
<div class="a" style="left:274px;top:588px;width:7px;height:1px;background:#9aa0aa;"></div>
<div class="a" style="left:277px;top:585px;width:1px;height:7px;background:#b8c0cc;"></div>
<div class="t" style="top:615.09px;font-size:11px;line-height:11px;color:#0000f0;letter-spacing:0.38px;font-weight:700;left:317px;-webkit-text-stroke:0.2px currentColor;">Position</div>
<div class="t" style="top:615.09px;font-size:11px;line-height:11px;color:#0000f0;letter-spacing:0.38px;font-weight:700;left:385px;-webkit-text-stroke:0.2px currentColor;">01.01.0004</div>
<div class="t" style="top:615.09px;font-size:11px;line-height:11px;color:#0000f0;letter-spacing:0.38px;font-weight:700;right:707px;-webkit-text-stroke:0.2px currentColor;">3</div>
<div class="t" style="top:615.09px;font-size:11px;line-height:11px;color:#0000f0;letter-spacing:0.38px;font-weight:700;left:293px;width:600px;text-align:center;-webkit-text-stroke:0.2px currentColor;">m</div>
<div class="t" style="top:615.09px;font-size:11px;line-height:11px;color:#0000f0;letter-spacing:0.38px;font-weight:700;left:613px;-webkit-text-stroke:0.2px currentColor;">Boden für Suchgraben, zur Freilegung von Kabeln, nachAb</div>
<div class="t" style="top:628.09px;font-size:11px;line-height:11px;color:#0000f0;letter-spacing:0.38px;font-weight:700;left:613px;-webkit-text-stroke:0.2px currentColor;">trag des Oberbodens, profilgerecht lösen, außerhalbder</div>
<div class="t" style="top:615.09px;font-size:11px;line-height:11px;color:#0000f0;letter-spacing:0.38px;font-weight:700;right:233.5px;-webkit-text-stroke:0.2px currentColor;">43,92 €</div>
<div class="t" style="top:615.09px;font-size:11px;line-height:11px;color:#0000f0;letter-spacing:0.38px;font-weight:700;right:154px;-webkit-text-stroke:0.2px currentColor;">131,76 €</div>
<div class="a" style="left:272px;top:614px;width:11px;height:11px;box-sizing:border-box;border:1px solid #a0a0a0;background:#f6f6f6"></div>
<div class="a" style="left:274px;top:619px;width:7px;height:1px;background:#9aa0aa;"></div>
<div class="a" style="left:277px;top:616px;width:1px;height:7px;background:#b8c0cc;"></div>
<div class="t" style="top:646.09px;font-size:11px;line-height:11px;color:#0000f0;letter-spacing:0.38px;font-weight:700;left:317px;-webkit-text-stroke:0.2px currentColor;">Position</div>
<div class="t" style="top:646.09px;font-size:11px;line-height:11px;color:#0000f0;letter-spacing:0.38px;font-weight:700;left:385px;-webkit-text-stroke:0.2px currentColor;">01.01.0005</div>
<div class="t" style="top:646.09px;font-size:11px;line-height:11px;color:#0000f0;letter-spacing:0.38px;font-weight:700;right:707px;-webkit-text-stroke:0.2px currentColor;">7</div>
<div class="t" style="top:646.09px;font-size:11px;line-height:11px;color:#0000f0;letter-spacing:0.38px;font-weight:700;left:293px;width:600px;text-align:center;-webkit-text-stroke:0.2px currentColor;">m3</div>
<div class="t" style="top:646.09px;font-size:11px;line-height:11px;color:#0000f0;letter-spacing:0.38px;font-weight:700;right:233.5px;-webkit-text-stroke:0.2px currentColor;">242,72 €</div>
<div class="t" style="top:646.09px;font-size:11px;line-height:11px;color:#0000f0;letter-spacing:0.38px;font-weight:700;right:154px;-webkit-text-stroke:0.2px currentColor;">1.699,04 €</div>
<div class="a" style="left:272px;top:645px;width:11px;height:11px;box-sizing:border-box;border:1px solid #a0a0a0;background:#f6f6f6"></div>
<div class="a" style="left:274px;top:650px;width:7px;height:1px;background:#9aa0aa;"></div>
<div class="a" style="left:277px;top:647px;width:1px;height:7px;background:#b8c0cc;"></div>
<div class="t" style="top:677.09px;font-size:11px;line-height:11px;color:#0000f0;letter-spacing:0.38px;font-weight:700;left:317px;-webkit-text-stroke:0.2px currentColor;">Position</div>
<div class="t" style="top:677.09px;font-size:11px;line-height:11px;color:#0000f0;letter-spacing:0.38px;font-weight:700;left:385px;-webkit-text-stroke:0.2px currentColor;">01.01.0006</div>
<div class="t" style="top:677.09px;font-size:11px;line-height:11px;color:#0000f0;letter-spacing:0.38px;font-weight:700;right:707px;-webkit-text-stroke:0.2px currentColor;">40,65</div>
<div class="t" style="top:677.09px;font-size:11px;line-height:11px;color:#0000f0;letter-spacing:0.38px;font-weight:700;left:293px;width:600px;text-align:center;-webkit-text-stroke:0.2px currentColor;">m3</div>
<div class="t" style="top:677.09px;font-size:11px;line-height:11px;color:#0000f0;letter-spacing:0.38px;font-weight:700;right:233.5px;-webkit-text-stroke:0.2px currentColor;">485,44 €</div>
<div class="t" style="top:677.09px;font-size:11px;line-height:11px;color:#0000f0;letter-spacing:0.38px;font-weight:700;right:154px;-webkit-text-stroke:0.2px currentColor;">19.733,14 €</div>
<div class="a" style="left:272px;top:676px;width:11px;height:11px;box-sizing:border-box;border:1px solid #a0a0a0;background:#f6f6f6"></div>
<div class="a" style="left:274px;top:681px;width:7px;height:1px;background:#9aa0aa;"></div>
<div class="a" style="left:277px;top:678px;width:1px;height:7px;background:#b8c0cc;"></div>
<div class="t" style="top:704.64px;font-size:10.7px;line-height:10.7px;color:#111;font-weight:700;left:230px;">Zahlungsart *</div>
<div class="a" style="left:230px;top:717px;width:516px;height:16px;background:#fff;border:1px solid #111;box-sizing:border-box;background:#f7f7f7;"></div>
<div class="t" style="top:720.73px;font-size:9.3px;line-height:9.3px;color:#000;left:232px;">Zahlbar innerhalb von 30 Tagen ohne Abzug</div>
<div class="a" style="left:746.5px;top:717px;width:16.0px;height:16px;background:#f2f2f2;border:1px solid #111;box-sizing:border-box;"></div>
<svg class="a" style="left:750px;top:721px" width="9" height="9" viewBox="0 0 9 9"><path d="M1.3 1.5l5.8 5.8M7.1 1.5l-5.8 5.8" stroke="#f05a5a" stroke-width="1.2"/></svg>
<div class="t" style="top:704.64px;font-size:10.7px;line-height:10.7px;color:#111;font-weight:700;left:767.5px;">GP Summe</div>
<div class="t" style="top:704.64px;font-size:10.7px;line-height:10.7px;color:#111;font-weight:700;left:835.7px;">Rabattfähig</div>
<div class="t" style="top:704.64px;font-size:10.7px;line-height:10.7px;color:#111;font-weight:700;left:903.2px;">± % *</div>
<div class="t" style="top:704.64px;font-size:10.7px;line-height:10.7px;color:#111;font-weight:700;left:943.6px;">Netto</div>
<div class="t" style="top:704.64px;font-size:10.7px;line-height:10.7px;color:#111;font-weight:700;left:1011px;">USt.</div>
<div class="t" style="top:704.64px;font-size:10.7px;line-height:10.7px;color:#111;font-weight:700;left:1079px;">Brutto</div>
<div class="a" style="left:767px;top:717px;width:68.5px;height:16px;background:#fff;border:1px solid #111;box-sizing:border-box;"></div>
<div class="t" style="top:720.00px;font-size:9.8px;line-height:9.8px;color:#000;letter-spacing:-0.25px;left:769.5px;">145.131,52 €</div>
<div class="a" style="left:835px;top:717px;width:68.5px;height:16px;background:#f0f0f0;border:1px solid #111;box-sizing:border-box;"></div>
<div class="t" style="top:720.00px;font-size:9.8px;line-height:9.8px;color:#000;letter-spacing:-0.25px;left:837.5px;">145.131,52 €</div>
<div class="a" style="left:903px;top:717px;width:40.5px;height:16px;background:#fff;border:1px solid #111;box-sizing:border-box;"></div>
<div class="a" style="left:943px;top:717px;width:68.5px;height:16px;background:#fff;border:1px solid #111;box-sizing:border-box;"></div>
<div class="t" style="top:720.00px;font-size:9.8px;line-height:9.8px;color:#000;letter-spacing:-0.25px;left:945.5px;">145.131,52 €</div>
<div class="a" style="left:1011px;top:717px;width:68.5px;height:16px;background:#f0f0f0;border:1px solid #111;box-sizing:border-box;"></div>
<div class="t" style="top:720.00px;font-size:9.8px;line-height:9.8px;color:#000;letter-spacing:-0.25px;left:1013.5px;">27.574,99 €</div>
<div class="a" style="left:1079px;top:717px;width:68px;height:16px;background:#fff;border:1px solid #111;box-sizing:border-box;"></div>
<div class="t" style="top:720.00px;font-size:9.8px;line-height:9.8px;color:#000;letter-spacing:-0.25px;left:1081.5px;">172.706,51 €</div>
<div class="a" style="left:1163px;top:145px;width:108px;height:152px;background:#e0e0e0;border:1px solid #aaa69a;box-sizing:border-box;"></div>
<div class="a" style="left:1164px;top:146px;width:106px;height:19px;background:#c0c0c0;"></div>
<div class="a" style="left:1164px;top:165px;width:106px;height:1px;background:#aaa69a;"></div>
<div class="t" style="top:151.03px;font-size:11.3px;line-height:11.3px;color:#4a5468;left:1170px;">Übersicht</div>
<svg class="a" style="left:1252px;top:153px" width="8" height="6" viewBox="0 0 8 6"><path d="M0.5 5h7l-3.5-4z" fill="#333"/></svg>
<div class="t" style="top:169.70px;font-size:9.8px;line-height:9.8px;color:#000;letter-spacing:-0.35px;left:1166.9px;-webkit-text-stroke:0.05px #000;">Modus *</div>
<div class="a" style="left:1211px;top:169px;width:56px;height:11px;background:#ffffff;"></div>
<div class="t" style="top:181.70px;font-size:9.8px;line-height:9.8px;color:#000;letter-spacing:-0.35px;left:1166.9px;-webkit-text-stroke:0.05px #000;">Kennung</div>
<div class="a" style="left:1211px;top:181px;width:56px;height:11px;background:#ffffff;"></div>
<div class="t" style="top:193.70px;font-size:9.8px;line-height:9.8px;color:#000;letter-spacing:-0.35px;left:1166.9px;-webkit-text-stroke:0.05px #000;">OZ</div>
<div class="a" style="left:1211px;top:193px;width:56px;height:11px;background:#ffffff;"></div>
<div class="t" style="top:205.70px;font-size:9.8px;line-height:9.8px;color:#000;letter-spacing:-0.35px;left:1166.9px;-webkit-text-stroke:0.05px #000;">Nummer</div>
<div class="a" style="left:1211px;top:205px;width:56px;height:11px;background:#f3f3f3;"></div>
<div class="t" style="top:217.70px;font-size:9.8px;line-height:9.8px;color:#000;letter-spacing:-0.35px;left:1166.9px;-webkit-text-stroke:0.05px #000;">Menge</div>
<div class="a" style="left:1211px;top:217px;width:32px;height:11px;background:#ffffff;"></div>
<div class="a" style="left:1244px;top:217px;width:23px;height:11px;background:#ffffff;"></div>
<div class="t" style="top:229.70px;font-size:9.8px;line-height:9.8px;color:#000;letter-spacing:-0.35px;left:1166.9px;-webkit-text-stroke:0.05px #000;">Verbrauch</div>
<div class="a" style="left:1211px;top:229px;width:32px;height:11px;background:#ffffff;"></div>
<div class="a" style="left:1244px;top:229px;width:23px;height:11px;background:#ffffff;"></div>
<div class="t" style="top:241.70px;font-size:9.8px;line-height:9.8px;color:#000;letter-spacing:-0.35px;left:1166.9px;-webkit-text-stroke:0.05px #000;">± % VK</div>
<div class="a" style="left:1211px;top:241px;width:56px;height:11px;background:#ffffff;"></div>
<div class="t" style="top:257.70px;font-size:9.8px;line-height:9.8px;color:#000;letter-spacing:-0.35px;left:1166.9px;-webkit-text-stroke:0.05px #000;">EK Total</div>
<div class="a" style="left:1211px;top:257px;width:56px;height:11px;background:#f3f3f3;"></div>
<div class="t" style="top:269.70px;font-size:9.8px;line-height:9.8px;color:#000;letter-spacing:-0.35px;left:1166.9px;-webkit-text-stroke:0.05px #000;">VK Total</div>
<div class="a" style="left:1211px;top:269px;width:56px;height:11px;background:#ffffff;"></div>
<div class="t" style="top:281.70px;font-size:9.8px;line-height:9.8px;color:#000;letter-spacing:-0.35px;left:1166.9px;-webkit-text-stroke:0.05px #000;">Zuschlag</div>
<div class="a" style="left:1211px;top:281px;width:56px;height:11px;background:#ffffff;"></div>
<div class="a" style="left:1163px;top:305px;width:108px;height:100px;background:#e0e0e0;border:1px solid #aaa69a;box-sizing:border-box;"></div>
<div class="a" style="left:1164px;top:306px;width:106px;height:19px;background:#c0c0c0;"></div>
<div class="a" style="left:1164px;top:325px;width:106px;height:1px;background:#aaa69a;"></div>
<div class="t" style="top:311.03px;font-size:11.3px;line-height:11.3px;color:#4a5468;left:1170px;">Material</div>
<svg class="a" style="left:1252px;top:313px" width="8" height="6" viewBox="0 0 8 6"><path d="M0.5 5h7l-3.5-4z" fill="#333"/></svg>
<div class="t" style="top:329.70px;font-size:9.8px;line-height:9.8px;color:#000;letter-spacing:-0.35px;left:1166.9px;-webkit-text-stroke:0.05px #000;">LP/Einh</div>
<div class="a" style="left:1211px;top:329px;width:56px;height:11px;background:#ffffff;"></div>
<div class="t" style="top:341.70px;font-size:9.8px;line-height:9.8px;color:#000;letter-spacing:-0.35px;left:1166.9px;-webkit-text-stroke:0.05px #000;">Bez.-Rab.</div>
<div class="a" style="left:1211px;top:341px;width:56px;height:11px;background:#ffffff;"></div>
<div class="t" style="top:353.70px;font-size:9.8px;line-height:9.8px;color:#000;letter-spacing:-0.35px;left:1166.9px;-webkit-text-stroke:0.05px #000;">EK/Einh</div>
<div class="a" style="left:1211px;top:353px;width:56px;height:11px;background:#ffffff;"></div>
<div class="t" style="top:365.70px;font-size:9.8px;line-height:9.8px;color:#000;letter-spacing:-0.35px;left:1166.9px;-webkit-text-stroke:0.05px #000;">EK Total</div>
<div class="a" style="left:1211px;top:365px;width:56px;height:11px;background:#f3f3f3;"></div>
<div class="t" style="top:377.70px;font-size:9.8px;line-height:9.8px;color:#000;letter-spacing:-0.35px;left:1166.9px;-webkit-text-stroke:0.05px #000;">VK Total</div>
<div class="a" style="left:1211px;top:377px;width:56px;height:11px;background:#f3f3f3;"></div>
<div class="t" style="top:389.70px;font-size:9.8px;line-height:9.8px;color:#000;letter-spacing:-0.35px;left:1166.9px;-webkit-text-stroke:0.05px #000;">Faktor</div>
<div class="a" style="left:1211px;top:389px;width:56px;height:11px;background:#f3f3f3;"></div>
<div class="a" style="left:1163px;top:413px;width:108px;height:64px;background:#e0e0e0;border:1px solid #aaa69a;box-sizing:border-box;"></div>
<div class="a" style="left:1164px;top:414px;width:106px;height:19px;background:#c0c0c0;"></div>
<div class="a" style="left:1164px;top:433px;width:106px;height:1px;background:#aaa69a;"></div>
<div class="t" style="top:419.03px;font-size:11.3px;line-height:11.3px;color:#4a5468;left:1170px;">Lohn</div>
<svg class="a" style="left:1252px;top:421px" width="8" height="6" viewBox="0 0 8 6"><path d="M0.5 5h7l-3.5-4z" fill="#333"/></svg>
<div class="t" style="top:437.70px;font-size:9.8px;line-height:9.8px;color:#000;letter-spacing:-0.35px;left:1166.9px;-webkit-text-stroke:0.05px #000;">EK Total</div>
<div class="a" style="left:1211px;top:437px;width:56px;height:11px;background:#f3f3f3;"></div>
<div class="t" style="top:449.70px;font-size:9.8px;line-height:9.8px;color:#000;letter-spacing:-0.35px;left:1166.9px;-webkit-text-stroke:0.05px #000;">VK Total</div>
<div class="a" style="left:1211px;top:449px;width:56px;height:11px;background:#f3f3f3;"></div>
<div class="t" style="top:461.70px;font-size:9.8px;line-height:9.8px;color:#000;letter-spacing:-0.35px;left:1166.9px;-webkit-text-stroke:0.05px #000;">VSatz / h</div>
<div class="a" style="left:1211px;top:461px;width:56px;height:11px;background:#f3f3f3;"></div>
<div class="a" style="left:1163px;top:485px;width:108px;height:76px;background:#e0e0e0;border:1px solid #aaa69a;box-sizing:border-box;"></div>
<div class="a" style="left:1164px;top:486px;width:106px;height:19px;background:#c0c0c0;"></div>
<div class="a" style="left:1164px;top:505px;width:106px;height:1px;background:#aaa69a;"></div>
<div class="t" style="top:491.03px;font-size:11.3px;line-height:11.3px;color:#4a5468;left:1170px;">Rest</div>
<svg class="a" style="left:1252px;top:493px" width="8" height="6" viewBox="0 0 8 6"><path d="M0.5 5h7l-3.5-4z" fill="#333"/></svg>
<div class="t" style="top:509.70px;font-size:9.8px;line-height:9.8px;color:#000;letter-spacing:-0.35px;left:1166.9px;-webkit-text-stroke:0.05px #000;">EK Rohst.</div>
<div class="a" style="left:1211px;top:509px;width:56px;height:11px;background:#f3f3f3;"></div>
<div class="t" style="top:521.70px;font-size:9.8px;line-height:9.8px;color:#000;letter-spacing:-0.35px;left:1166.9px;-webkit-text-stroke:0.05px #000;">VK Rohst.</div>
<div class="a" style="left:1211px;top:521px;width:56px;height:11px;background:#f3f3f3;"></div>
<div class="t" style="top:533.70px;font-size:9.8px;line-height:9.8px;color:#000;letter-spacing:-0.35px;left:1166.9px;-webkit-text-stroke:0.05px #000;">EK Sonst.</div>
<div class="a" style="left:1211px;top:533px;width:56px;height:11px;background:#f3f3f3;"></div>
<div class="t" style="top:545.70px;font-size:9.8px;line-height:9.8px;color:#000;letter-spacing:-0.35px;left:1166.9px;-webkit-text-stroke:0.05px #000;">VK Sonst.</div>
<div class="a" style="left:1211px;top:545px;width:56px;height:11px;background:#f3f3f3;"></div>
<div class="a" style="left:1163px;top:569px;width:108px;height:76px;background:#e0e0e0;border:1px solid #aaa69a;box-sizing:border-box;"></div>
<div class="a" style="left:1164px;top:570px;width:106px;height:19px;background:#c0c0c0;"></div>
<div class="a" style="left:1164px;top:589px;width:106px;height:1px;background:#aaa69a;"></div>
<div class="t" style="top:575.03px;font-size:11.3px;line-height:11.3px;color:#4a5468;left:1170px;">Zeit</div>
<svg class="a" style="left:1252px;top:577px" width="8" height="6" viewBox="0 0 8 6"><path d="M0.5 5h7l-3.5-4z" fill="#333"/></svg>
<div class="t" style="top:593.70px;font-size:9.8px;line-height:9.8px;color:#000;letter-spacing:-0.35px;left:1166.9px;-webkit-text-stroke:0.05px #000;">Min/Einh</div>
<div class="a" style="left:1211px;top:593px;width:56px;height:11px;background:#ffffff;"></div>
<div class="t" style="top:605.70px;font-size:9.8px;line-height:9.8px;color:#000;letter-spacing:-0.35px;left:1166.9px;-webkit-text-stroke:0.05px #000;">Zeit Ges.</div>
<div class="a" style="left:1211px;top:605px;width:56px;height:11px;background:#ffffff;"></div>
<div class="t" style="top:617.70px;font-size:9.8px;line-height:9.8px;color:#000;letter-spacing:-0.35px;left:1166.9px;-webkit-text-stroke:0.05px #000;">Manntage</div>
<div class="a" style="left:1211px;top:617px;width:56px;height:11px;background:#ffffff;"></div>
<div class="t" style="top:629.70px;font-size:9.8px;line-height:9.8px;color:#000;letter-spacing:-0.35px;left:1166.9px;-webkit-text-stroke:0.05px #000;">Leistg. / h</div>
<div class="a" style="left:1211px;top:629px;width:32px;height:11px;background:#f3f3f3;"></div>
<div class="a" style="left:1244px;top:629px;width:23px;height:11px;background:#f3f3f3;"></div>
<div class="a" style="left:1163px;top:653px;width:108px;height:88px;background:#e0e0e0;border:1px solid #aaa69a;box-sizing:border-box;"></div>
<div class="a" style="left:1164px;top:654px;width:106px;height:19px;background:#c0c0c0;"></div>
<div class="a" style="left:1164px;top:673px;width:106px;height:1px;background:#aaa69a;"></div>
<div class="t" style="top:659.03px;font-size:11.3px;line-height:11.3px;color:#4a5468;left:1170px;">DB</div>
<svg class="a" style="left:1252px;top:661px" width="8" height="6" viewBox="0 0 8 6"><path d="M0.5 5h7l-3.5-4z" fill="#333"/></svg>
<div class="t" style="top:677.70px;font-size:9.8px;line-height:9.8px;color:#000;letter-spacing:-0.35px;left:1166.9px;-webkit-text-stroke:0.05px #000;">DB I</div>
<div class="a" style="left:1211px;top:677px;width:56px;height:11px;background:#ffffff;"></div>
<div class="t" style="top:689.70px;font-size:9.8px;line-height:9.8px;color:#000;letter-spacing:-0.35px;left:1166.9px;-webkit-text-stroke:0.05px #000;">DB I / h</div>
<div class="a" style="left:1211px;top:689px;width:56px;height:11px;background:#ffffff;"></div>
<div class="t" style="top:701.70px;font-size:9.8px;line-height:9.8px;color:#000;letter-spacing:-0.35px;left:1166.9px;-webkit-text-stroke:0.05px #000;">DB I %</div>
<div class="a" style="left:1211px;top:701px;width:56px;height:11px;background:#f3f3f3;"></div>
<div class="t" style="top:713.70px;font-size:9.8px;line-height:9.8px;color:#000;letter-spacing:-0.35px;left:1166.9px;-webkit-text-stroke:0.05px #000;">DB II</div>
<div class="a" style="left:1211px;top:713px;width:56px;height:11px;background:#f3f3f3;"></div>
<div class="t" style="top:725.70px;font-size:9.8px;line-height:9.8px;color:#000;letter-spacing:-0.35px;left:1166.9px;-webkit-text-stroke:0.05px #000;">DB II / h</div>
<div class="a" style="left:1211px;top:725px;width:56px;height:11px;background:#f3f3f3;"></div>
<div class="a" style="left:0px;top:751px;width:707px;height:18px;border:1px solid #a8a8a8;box-sizing:border-box;border-bottom-color:#fff;border-right:none;"></div>
<div class="a" style="left:710px;top:751px;width:168px;height:18px;border:1px solid #c4c4c4;box-sizing:border-box;border-top-color:#a8a8a8;border-left-color:#a8a8a8;border-bottom-color:#fff;border-right-color:#fff;"></div>
<div class="t" style="top:754.87px;font-size:12.2px;line-height:12.2px;color:#111;left:494.0px;width:600px;text-align:center;">11823 Position.Absatzmarke</div>
<div class="a" style="left:881px;top:751px;width:77px;height:18px;border:1px solid #c4c4c4;box-sizing:border-box;border-top-color:#a8a8a8;border-left-color:#a8a8a8;border-bottom-color:#fff;border-right-color:#fff;"></div>
<div class="t" style="top:754.87px;font-size:12.2px;line-height:12.2px;color:#111;left:619.5px;width:600px;text-align:center;">1. Angebot</div>
<div class="a" style="left:961px;top:751px;width:49px;height:18px;border:1px solid #c4c4c4;box-sizing:border-box;border-top-color:#a8a8a8;border-left-color:#a8a8a8;border-bottom-color:#fff;border-right-color:#fff;"></div>
<div class="t" style="top:754.87px;font-size:12.2px;line-height:12.2px;color:#111;left:685.5px;width:600px;text-align:center;">götter</div>
<div class="a" style="left:1013px;top:751px;width:38px;height:18px;border:1px solid #c4c4c4;box-sizing:border-box;border-top-color:#a8a8a8;border-left-color:#a8a8a8;border-bottom-color:#fff;border-right-color:#fff;"></div>
<div class="t" style="top:754.87px;font-size:12.2px;line-height:12.2px;color:#111;left:732.0px;width:600px;text-align:center;">#5</div>
<div class="a" style="left:1054px;top:751px;width:206px;height:18px;border:1px solid #c4c4c4;box-sizing:border-box;border-top-color:#a8a8a8;border-left-color:#a8a8a8;border-bottom-color:#fff;border-right-color:#fff;"></div>
<div class="t" style="top:754.87px;font-size:12.2px;line-height:12.2px;color:#111;left:857.0px;width:600px;text-align:center;">admin - Moser-Dokumentation.mdb</div>
</body></html>
